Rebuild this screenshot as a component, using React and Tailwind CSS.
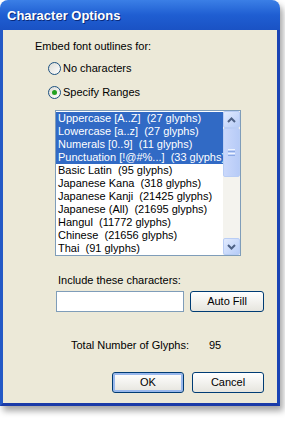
import React from "react"

const items = [
  { label: "Uppercase [A..Z]  (27 glyphs)", selected: true },
  { label: "Lowercase [a..z]  (27 glyphs)", selected: true },
  { label: "Numerals [0..9]  (11 glyphs)", selected: true },
  { label: "Punctuation [!@#%...]  (33 glyphs)", selected: true },
  { label: "Basic Latin  (95 glyphs)" },
  { label: "Japanese Kana  (318 glyphs)" },
  { label: "Japanese Kanji  (21425 glyphs)" },
  { label: "Japanese (All)  (21695 glyphs)" },
  { label: "Hangul  (11772 glyphs)" },
  { label: "Chinese  (21656 glyphs)" },
  { label: "Thai  (91 glyphs)" },
]

function Radio({ checked, label }) {
  return (
    <div className="flex items-center h-[13px] ml-[45px]">
      <span className="w-[13px] h-[13px] rounded-full border border-[#1c5180] bg-linear-to-br from-[#dcdcd6] to-white flex items-center justify-center">
        {checked ? <span className="w-[5px] h-[5px] rounded-full bg-[#21a121]" /> : null}
      </span>
      <span className="ml-[2px]">{label}</span>
    </div>
  )
}

function Button({ children, isDefault, className = "" }) {
  return (
    <div className={`h-[21px] rounded-[3px] border border-[#003c74] bg-linear-to-b from-white to-[#e6e5de] flex items-center justify-center ${isDefault ? "shadow-[inset_0_0_0_2px_#99b8ec]" : ""} ${className}`}>
      {children}
    </div>
  )
}

function ScrollArrow({ up }) {
  return (
    <div className="h-[17px] w-[17px] rounded-[2px] border border-[#b9cdf5] bg-linear-to-br from-[#e2ebfe] to-[#b6ccf7] flex items-center justify-center">
      <svg width="9" height="6" viewBox="0 0 9 6">
        <path d={up ? "M1 5 L4.5 1.5 L8 5" : "M1 1 L4.5 4.5 L8 1"} fill="none" stroke="#4d6185" strokeWidth="2" />
      </svg>
    </div>
  )
}

export default function App() {
  return (
    <div className="w-[285px] h-[422px] bg-white text-[11px] leading-[13px] text-black" style={{ fontFamily: '"Liberation Sans", Arial, sans-serif' }}>
      <div className="w-[280px] shadow-[3px_5px_6px_rgba(0,0,0,0.35)] rounded-t-[8px]">
        <div className="h-[30px] rounded-t-[8px] bg-linear-to-b from-[#3b7fe6] via-[#1f5ed2] to-[#1a52c4] flex items-center pl-[7px] text-white font-bold text-[13px]" style={{ textShadow: "1px 1px 0 #0a2a7a" }}>
          Character Options
        </div>
        <div className="bg-[#ece9d8] border-x-[3px] border-b-[3px] border-l-[#2459c6] border-r-[#1a44b4] border-b-[#1a3aa8] pb-[10px] flex flex-col">
          <div className="ml-[32px] mt-[10px]">Embed font outlines for:</div>
          <div className="mt-[9px]"><Radio label="No characters" /></div>
          <div className="mt-[11px]"><Radio checked label="Specify Ranges" /></div>
          <div className="mt-[11px] ml-[52px] w-[186px] h-[146px] border border-[#7f9db9] bg-white flex">
            <div className="flex-1 overflow-hidden pt-[1px]">
              {items.map((it) => (
                <div key={it.label} className={`h-[13px] pl-[2px] whitespace-pre ${it.selected ? "bg-[#316ac5] text-white" : ""}`}>
                  {it.label}
                </div>
              ))}
            </div>
            <div className="w-[17px] bg-[#f4f3ee] flex flex-col">
              <ScrollArrow up />
              <div className="flex-1 flex flex-col">
                <div className="h-[49px] rounded-[2px] border border-[#b9cdf5] bg-linear-to-r from-[#cad8fb] to-[#b7cbf7] flex flex-col items-center justify-center gap-[1px]">
                  <span className="w-[7px] h-[1px] bg-[#eef4fe]" />
                  <span className="w-[7px] h-[1px] bg-[#8ca9e5]" />
                  <span className="w-[7px] h-[1px] bg-[#eef4fe]" />
                  <span className="w-[7px] h-[1px] bg-[#8ca9e5]" />
                </div>
              </div>
              <ScrollArrow />
            </div>
          </div>
          <div className="mt-[18px] ml-[55px]">Include these characters:</div>
          <div className="mt-[4px] ml-[53px] flex gap-[6px]">
            <div className="w-[128px] h-[21px] border border-[#7f9db9] bg-white" />
            <Button className="w-[74px]">Auto Fill</Button>
          </div>
          <div className="mt-[27px] ml-[68px] flex">
            <span className="w-[138px]">Total Number of Glyphs:</span>
            <span>95</span>
          </div>
          <div className="mt-[20px] ml-[109px] flex gap-[8px]">
            <Button isDefault className="w-[72px]">OK</Button>
            <Button className="w-[72px]">Cancel</Button>
          </div>
        </div>
      </div>
    </div>
  )
}
